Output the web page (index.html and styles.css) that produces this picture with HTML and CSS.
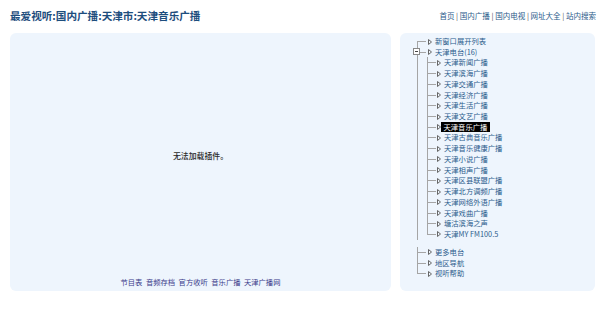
FILE: index.html
```html
<!DOCTYPE html>
<html lang="zh-CN">
<head>
<meta charset="utf-8">
<title>天津音乐广播</title>
<link rel="stylesheet" href="styles.css">
</head>
<body>
<div class="top">
  <div class="title">最爱视听:国内广播:天津市:天津音乐广播</div>
  <div class="nav"><a>首页</a> | <a>国内广播</a> | <a>国内电视</a> | <a>网址大全</a> | <a>站内搜索</a></div>
</div>
<div class="main">
  <div class="player">
    <div class="msg">无法加载插件。</div>
    <div class="links"><a>节目表</a><a>音频存档</a><a>官方收听</a><a>音乐广播</a><a>天津广播网</a></div>
  </div>
  <div class="side">
    <ul class="tree">
      <li class="first"><i class="ar"></i>新窗口展开列表</li>
      <li class="open"><b class="box"></b><i class="ar"></i>天津电台(16)
        <ul class="sub">
          <li><i class="ar"></i>天津新闻广播</li>
          <li><i class="ar"></i>天津滨海广播</li>
          <li><i class="ar"></i>天津交通广播</li>
          <li><i class="ar"></i>天津经济广播</li>
          <li><i class="ar"></i>天津生活广播</li>
          <li><i class="ar"></i>天津文艺广播</li>
          <li><i class="ar"></i><span class="sel">天津音乐广播</span></li>
          <li><i class="ar"></i>天津古典音乐广播</li>
          <li><i class="ar"></i>天津音乐健康广播</li>
          <li><i class="ar"></i>天津小说广播</li>
          <li><i class="ar"></i>天津相声广播</li>
          <li><i class="ar"></i>天津区县联盟广播</li>
          <li><i class="ar"></i>天津北方调频广播</li>
          <li><i class="ar"></i>天津网络外语广播</li>
          <li><i class="ar"></i>天津戏曲广播</li>
          <li><i class="ar"></i>塘沽滨海之声</li>
          <li class="last"><i class="ar"></i>天津MY FM100.5</li>
        </ul>
      </li>
      <li><i class="ar"></i>更多电台</li>
      <li><i class="ar"></i>地区导航</li>
      <li class="last"><i class="ar"></i>视听帮助</li>
    </ul>
  </div>
</div>
</body>
</html>
```

FILE: styles.css
```css
html, body {
  margin: 0;
  padding: 0;
  background: #fff;
}
body {
  width: 600px;
  height: 312px;
  overflow: hidden;
  font-family: "Noto Sans CJK SC", "Noto Sans", sans-serif;
}
a { cursor: pointer; }

.top {
  display: flex;
  justify-content: space-between;
  align-items: center;
  height: 30px;
  padding: 0 4px 0 10px;
}
.title {
  font-size: 10.6px;
  font-weight: bold;
  color: #1d4d7d;
}
.nav {
  font-size: 7.5px;
  color: #555;
}
.nav a { color: #2a5a8a; }

.main {
  display: flex;
  gap: 9px;
  margin-top: 3px;
  padding: 0 5px 0 10px;
  height: 258px;
}
.player {
  width: 381px;
  background: #eef5fd;
  border-radius: 6px;
  display: flex;
  flex-direction: column;
}
.msg {
  flex: 1;
  display: flex;
  align-items: center;
  justify-content: center;
  font-size: 7.9px;
  color: #2a2a2a;
  font-weight: 500;
  padding-top: 1px;
}
.links {
  display: flex;
  justify-content: center;
  gap: 3.5px;
  font-size: 7.3px;
  line-height: 11px;
  padding-bottom: 3px;
}
.links a { color: #3b3b8a; }

.side {
  width: 195px;
  background: #eef5fd;
  border-radius: 6px;
  padding: 3px 0 0 17px;
  box-sizing: border-box;
}

.tree, .tree ul {
  list-style: none;
  margin: 0;
  padding: 0;
}
.tree li {
  position: relative;
  padding-left: 11px;
  line-height: 10.72px;
  font-size: 7.3px;
  color: #2b5c8c;
  white-space: nowrap;
}
.tree li::before {
  content: "";
  position: absolute;
  left: 0;
  top: 0;
  bottom: 0;
  border-left: 1px solid #a5a5a5;
}
.tree li.first::before { top: 5px; }
.tree li.last::before { bottom: auto; height: 5px; }
.tree li::after {
  content: "";
  position: absolute;
  left: 0;
  top: 5px;
  width: 9px;
  border-top: 1px solid #a5a5a5;
}
.tree .sub {
  margin-left: -1px;
  margin-bottom: 7.3px;
}
.tree .sub li { padding-left: 10px; }

.ar {
  display: inline-block;
  width: 4px;
  height: 6px;
  margin-right: 3px;
  vertical-align: -0.5px;
  background: url("data:image/svg+xml,%3Csvg xmlns='http://www.w3.org/2000/svg' width='4' height='6'%3E%3Cpath d='M0.5 0.5 L3.5 3 L0.5 5.5 Z' fill='none' stroke='%23666' stroke-width='1'/%3E%3C/svg%3E") no-repeat;
}
.box {
  position: absolute;
  left: -4px;
  top: 1px;
  width: 7px;
  height: 7px;
  box-sizing: border-box;
  border: 1px solid #888;
  background: #fff;
  z-index: 1;
}
.box::after {
  content: "";
  position: absolute;
  left: 1px;
  right: 1px;
  top: 2px;
  border-top: 1px solid #444;
}
.sel {
  background: #000;
  color: #fff;
  padding: 0 2.5px;
  margin-left: -3px;
  display: inline-block;
  line-height: 10.72px;
}
```
